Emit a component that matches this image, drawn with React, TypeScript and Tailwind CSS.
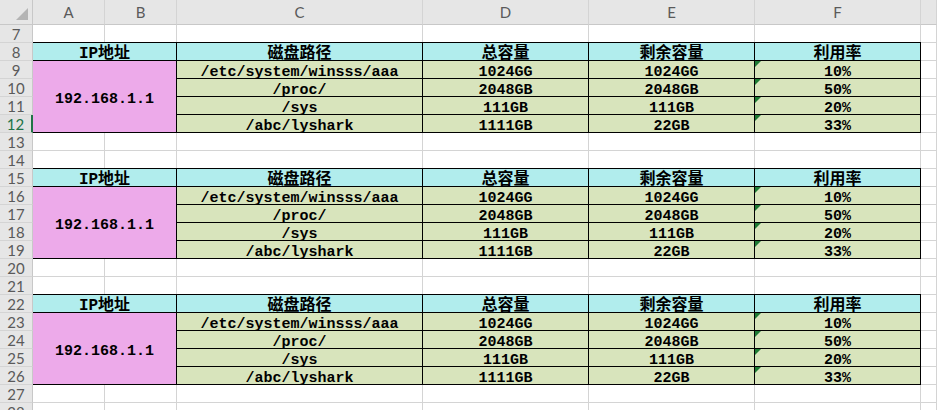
import type { ReactNode } from "react";

const cellFont = "font-['Liberation_Mono','Noto_Sans_CJK_SC',monospace] font-bold text-[15px] text-black leading-none";
const headFont = "font-['Lato','Liberation_Sans',sans-serif] text-[15px] text-[#5a5a5a] leading-none";

const COLS = [
  { key: "A", w: "w-[72px]" },
  { key: "B", w: "w-[72px]" },
  { key: "C", w: "w-[246px]" },
  { key: "D", w: "w-[166px]" },
  { key: "E", w: "w-[166px]" },
  { key: "F", w: "w-[166px]" },
  { key: "G", w: "w-[16px]" },
];

const DISKS = [
  { path: "/etc/system/winsss/aaa", total: "1024GG", free: "1024GG", rate: "10%" },
  { path: "/proc/", total: "2048GB", free: "2048GB", rate: "50%" },
  { path: "/sys", total: "111GB", free: "111GB", rate: "20%" },
  { path: "/abc/lyshark", total: "1111GB", free: "22GB", rate: "33%" },
];

// sheet layout, row 7 down to 28
const LAYOUT: ("blank" | "table")[] = [
  "blank", "table", "blank", "blank", "table", "blank", "blank", "table", "blank", "blank",
];

const ROW_NUMBERS = Array.from({ length: 22 }, (_, i) => i + 7);

function Corner() {
  return (
    <div className="w-[33px] shrink-0 h-full relative border-r border-b border-[#c8c8c8] bg-[#e6e6e6]">
      <svg width="12" height="12" viewBox="0 0 12 12" className="absolute right-[4px] bottom-[4px]">
        <polygon points="12,0 12,12 0,12" fill="#b4b4b4" />
      </svg>
    </div>
  );
}

function ColumnHeader() {
  return (
    <div className="flex h-[25px]">
      <Corner />
      {COLS.map((c) => (
        <div
          key={c.key}
          className={`${c.w} shrink-0 flex items-center justify-center border-r border-b border-r-[#d4d4d4] border-b-[#c8c8c8] bg-[#e6e6e6] ${headFont}`}
        >
          {c.key === "G" ? "" : c.key}
        </div>
      ))}
    </div>
  );
}

function RowHeaders() {
  return (
    <div className="w-[33px] shrink-0 flex flex-col">
      {ROW_NUMBERS.map((n) =>
        n === 12 ? (
          <div
            key={n}
            className={`h-[18px] shrink-0 flex items-center justify-center pt-[1px] border-b border-b-[#d4d4d4] border-r-2 border-r-[#217346] bg-[#e1e1e1] ${headFont} !text-[#217346]`}
          >
            {n}
          </div>
        ) : (
          <div
            key={n}
            className={`h-[18px] shrink-0 flex items-center justify-center pt-[1px] border-b border-r border-b-[#d4d4d4] border-r-[#c8c8c8] bg-[#e6e6e6] ${headFont}`}
          >
            {n}
          </div>
        )
      )}
    </div>
  );
}

function BlankRow() {
  return (
    <div className="flex h-[18px] shrink-0">
      {COLS.map((c) => (
        <div key={c.key} className={`${c.w} shrink-0 border-r border-b border-[#d4d4d4] bg-white`} />
      ))}
    </div>
  );
}

function Cell({ className, children }: { className: string; children?: ReactNode }) {
  return (
    <div className={`flex items-center justify-center whitespace-nowrap pt-[5px] ${cellFont} ${className}`}>
      {children}
    </div>
  );
}

function TextMark() {
  return (
    <span className="absolute left-0 top-0 w-0 h-0 border-t-[6px] border-t-[#1e7b34] border-r-[6px] border-r-transparent" />
  );
}

function DiskTable() {
  const head = "text-[16px] border-t border-r border-b border-black bg-[#b1eded]";
  const body = "border-r border-b border-black bg-[#d8e4bc]";
  const empty = "border-r border-b border-[#d4d4d4] bg-white";

  return (
    <div className="-mt-px grid grid-cols-[72px_72px_246px_166px_166px_166px_16px] grid-rows-[19px_18px_18px_18px_18px]">
      <Cell className={`col-span-2 ${head}`}>IP地址</Cell>
      <Cell className={head}>磁盘路径</Cell>
      <Cell className={head}>总容量</Cell>
      <Cell className={head}>剩余容量</Cell>
      <Cell className={head}>利用率</Cell>
      <Cell className="border-t border-r border-b border-[#d4d4d4] bg-white" />

      <Cell className="col-span-2 row-span-4 border-r border-b border-black bg-[#edaaea]">192.168.1.1</Cell>
      {DISKS.map((d) => (
        <div key={d.path} className="contents">
          <Cell className={body}>{d.path}</Cell>
          <Cell className={body}>{d.total}</Cell>
          <Cell className={body}>{d.free}</Cell>
          <Cell className={`relative ${body}`}>
            <TextMark />
            {d.rate}
          </Cell>
          <Cell className={empty} />
        </div>
      ))}
    </div>
  );
}

export default function App() {
  return (
    <div className="w-[937px] h-[410px] overflow-hidden bg-white">
      <ColumnHeader />
      <div className="flex">
        <RowHeaders />
        <div className="flex flex-col">
          {LAYOUT.map((kind, i) => (kind === "table" ? <DiskTable key={i} /> : <BlankRow key={i} />))}
        </div>
      </div>
    </div>
  );
}
